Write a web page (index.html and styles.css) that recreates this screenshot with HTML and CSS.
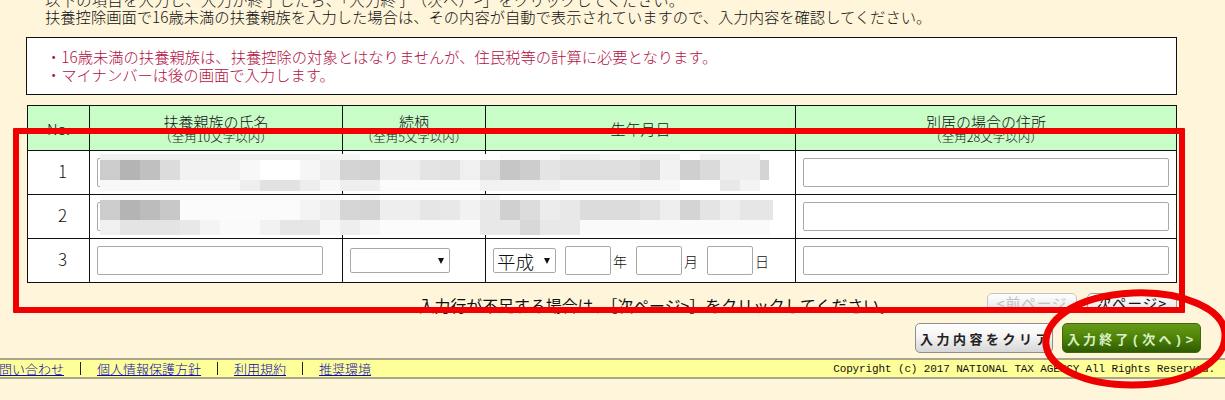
FILE: index.html
```html
<!DOCTYPE html>
<html lang="ja">
<head>
<meta charset="utf-8">
<title>扶養親族入力</title>
<link rel="stylesheet" href="styles.css">
</head>
<body>
<main class="page">
  <div class="intro">
    <p class="intro-first">以下の項目を入力し、入力が終了したら、「入力終了（次へ）&gt;」をクリックしてください。</p>
    <p>扶養控除画面で16歳未満の扶養親族を入力した場合は、その内容が自動で表示されていますので、入力内容を確認してください。</p>
  </div>
  <div class="notice">
    <p>・16歳未満の扶養親族は、扶養控除の対象とはなりませんが、住民税等の計算に必要となります。</p>
    <p>・マイナンバーは後の画面で入力します。</p>
  </div>
  <div class="table-wrap">
    <table class="grid">
      <colgroup>
        <col class="c-no"><col class="c-name"><col class="c-rel"><col class="c-date"><col class="c-addr">
      </colgroup>
      <thead>
        <tr>
          <th>No.</th>
          <th>扶養親族の氏名<small>（全角10文字以内）</small></th>
          <th>続柄<small>（全角5文字以内）</small></th>
          <th>生年月日</th>
          <th>別居の場合の住所<small>（全角28文字以内）</small></th>
        </tr>
      </thead>
      <tbody>
        <tr>
          <td class="num">1</td>
          <td><input class="field name" type="text"></td>
          <td></td>
          <td></td>
          <td><input class="field wide" type="text"></td>
        </tr>
        <tr>
          <td class="num">2</td>
          <td><input class="field name" type="text"></td>
          <td></td>
          <td></td>
          <td><input class="field wide" type="text"></td>
        </tr>
        <tr>
          <td class="num">3</td>
          <td><input class="field name" type="text"></td>
          <td><span class="sel sel-rel"><select><option></option></select></span></td>
          <td>
            <div class="date">
              <span class="sel sel-era"><select><option>平成</option></select></span>
              <input class="field day first" type="text"><span class="unit">年</span>
              <input class="field day" type="text"><span class="unit">月</span>
              <input class="field day" type="text"><span class="unit">日</span>
            </div>
          </td>
          <td><input class="field wide" type="text"></td>
        </tr>
      </tbody>
    </table>
    <div class="mosaic" aria-hidden="true">
      <div class="band b1a"></div>
      <div class="band b1b"></div>
      <div class="band b1c"></div>
      <div class="band-gap"></div>
      <div class="band b2a"></div>
      <div class="band b2b"></div>
      <div class="band b2c"></div>
    </div>
  </div>
  <div class="pager">
    <p class="pager-text">入力行が不足する場合は、［次ページ&gt;］をクリックしてください。</p>
    <button class="btn page-btn off" type="button">&lt;前ページ</button>
    <button class="btn page-btn" type="button">次ページ&gt;</button>
  </div>
  <div class="actions">
    <button class="btn clear" type="button">入力内容をクリア</button>
    <button class="btn finish" type="button">入力終了(次へ)&gt;</button>
  </div>
  <footer class="foot">
    <nav class="foot-links">
      <a href="#">お問い合わせ</a><span class="bar"></span>
      <a href="#">個人情報保護方針</a><span class="bar"></span>
      <a href="#">利用規約</a><span class="bar"></span>
      <a href="#">推奨環境</a>
    </nav>
    <span class="copy">Copyright (c) 2017 NATIONAL TAX AGENCY All Rights Reserved.</span>
  </footer>
</main>
<div class="mark-rect"></div>
<svg class="mark-oval" width="1225" height="400" viewBox="0 0 1225 400" aria-hidden="true">
  <path d="M1046 345 C1044 322 1072 296 1133 293 C1180 291 1226 308 1225 336 C1225 362 1186 385 1132 385 C1085 385 1049 368 1046 345 Z"/>
</svg>
</body>
</html>
```
FILE: styles.css
```css
* { box-sizing: border-box; }
html, body { margin: 0; padding: 0; height: 400px; overflow: hidden; }
body {
  position: relative;
  background: #fef5da;
  color: #111;
  font-family: "Noto Sans CJK JP", "Liberation Sans", sans-serif;
  font-weight: 300;
}
p { margin: 0; }
.intro {
  margin: -9px 0 0 45px;
  font-size: 15.3px;
  line-height: 17px;
  white-space: nowrap;
  height: 34px;
}
.intro-first { letter-spacing: 0.3px; }
.notice {
  margin: 12px 48px 0 26px;
  height: 58px;
  padding: 9px 0 0 19px;
  background: #fff;
  border: 1px solid #111;
  color: #b2103f;
  font-size: 15.3px;
  line-height: 18px;
  white-space: nowrap;
}
.table-wrap {
  position: relative;
  margin: 10px 0 0 27px;
  width: 1149px;
}
.grid {
  width: 1149px;
  table-layout: fixed;
  border-collapse: collapse;
  background: #fff;
}
.c-no { width: 62px; }
.c-name { width: 253px; }
.c-rel { width: 143px; }
.c-date { width: 310px; }
.c-addr { width: 381px; }
.grid th, .grid td {
  border: 1px solid #111;
  padding: 0 7px;
}
.grid th {
  height: 45px;
  padding: 0;
  background: #c8fdc8;
  font-size: 15px;
  font-weight: 300;
  line-height: 17px;
  vertical-align: middle;
}
.grid small {
  display: block;
  font-size: 12.5px;
  line-height: 14px;
}
.grid td { height: 44px; }
.grid .num {
  text-align: center;
  padding: 0 0 4px 8px;
  font-size: 17px;
}
.field {
  display: block;
  height: 29px;
  padding: 0;
  border: 1px solid #a9a9a9;
  border-radius: 2px;
  background: #fff;
}
.wide { width: 100%; }
.name { width: 226px; }
.sel { position: relative; display: block; height: 25px; }
.sel select {
  appearance: none;
  display: block;
  width: 100%;
  height: 100%;
  padding: 0 0 0 3px;
  border: 1px solid #a9a9a9;
  border-radius: 2px;
  background: #fff;
  color: #111;
  font-family: inherit;
  font-weight: 300;
  font-size: 18.5px;
  line-height: 22px;
}
.sel::after {
  content: "";
  position: absolute;
  right: 6px;
  top: 10px;
  border-left: 3px solid transparent;
  border-right: 3px solid transparent;
  border-top: 6px solid #111;
}
.sel-rel { width: 100px; }
.sel-era { width: 63px; }
.date { display: flex; align-items: center; }
.day { width: 46px; flex: none; margin-left: 7px; }
.day.first { margin-left: 9px; }
.unit { width: 18px; font-size: 14px; padding-left: 2px; flex: none; }
.mosaic {
  position: absolute;
  left: 73px;
  top: 49px;
  width: 680px;
}
.band { height: 6px; }
.band-gap { height: 4px; }
.b1a {
  background: linear-gradient(to right,
    #eef1ef 0 220px, #f4f6f4 220px 260px, #fff 260px 400px, #fafafa 400px 460px,
    #eef1ef 460px 500px, #f8f8f8 500px 540px, #eef1ef 540px 580px, #fff 580px 600px,
    #eef1ef 600px 660px, #fff 660px);
}
.b1b {
  height: 20px;
  background: linear-gradient(to right,
    #ccc 0 20px, #b4b4b4 20px 40px, #c0c0c0 40px 60px, #dcdcdc 60px 80px,
    #f2f2f2 80px 140px, #f8f8f8 140px 160px, #fff 160px 200px, #f6f6f6 200px 220px,
    #eee 220px 240px, #d4d4d4 240px 260px, #d2d2d2 260px 280px, #eee 280px 320px,
    #e4e4e4 320px 340px, #e2e2e2 340px 360px, #f0f0f0 360px 380px, #dedede 380px 400px,
    #c6c6c6 400px 420px, #cdcdcd 420px 440px, #e4e4e4 440px 460px, #dedede 460px 540px,
    #d8d8d8 540px 560px, #f2f2f2 560px 580px, #cfcfcf 580px 600px, #dadada 600px 620px,
    #eee 620px 660px, #d4d4d4 660px 669px, #fff 669px);
}
.b1c {
  height: 11px;
  background: linear-gradient(to right,
    #f8f8f8 0 140px, #efefef 140px 160px, #e2e2e2 160px 200px, #ededed 200px 220px,
    #f8f8f8 220px 240px, #efefef 240px 280px, #fbfbfb 280px 380px, #f2f2f2 380px 460px,
    #f8f8f8 460px 580px, #fff 580px 620px, #e8e8e8 620px 640px, #f4f4f4 640px 660px, #fff 660px);
}
.b2a {
  height: 5px;
  background: linear-gradient(to right, #fafafa 0 240px, #fff 240px 260px, #f6f6f6 260px 280px, #fff 280px 380px, #f2f2f2 380px 400px, #fff 400px);
}
.b2b {
  height: 20px;
  background: linear-gradient(to right,
    #ccc 0 20px, #b4b4b4 20px 40px, #bcbcbc 40px 60px, #c8c8c8 60px 80px,
    #fbfbfb 80px 200px, #f4f4f4 200px 220px, #eee 220px 240px, #d6d6d6 240px 260px,
    #d4d4d4 260px 280px, #eee 280px 320px, #e6e6e6 320px 340px, #e8e8e8 340px 360px,
    #f2f2f2 360px 380px, #e8e8e8 380px 400px, #d0d0d0 400px 420px, #dcdcdc 420px 440px,
    #ececec 440px 460px, #e8e8e8 460px 480px, #dcdcdc 480px 540px, #e2e2e2 540px 560px,
    #eee 560px 580px, #d4d4d4 580px 600px, #e4e4e4 600px 620px, #eee 620px 640px,
    #e6e6e6 640px 673px, #fff 673px);
}
.b2c {
  height: 15px;
  background: linear-gradient(to right,
    #f0f0f0 0 20px, #e4e4e4 20px 80px, #e8e8e8 80px 100px, #f4f4f4 100px 120px,
    #fafafa 120px 160px, #f2f2f2 160px 180px, #e6e6e6 180px 220px, #f8f8f8 220px 240px,
    #eee 240px 260px, #f6f6f6 260px 280px, #fcfcfc 280px 380px, #e8e8e8 380px 420px,
    #d8d8d8 420px 440px, #e8e8e8 440px 480px, #fafafa 480px 670px, #fff 670px);
}
.pager {
  display: flex;
  justify-content: flex-end;
  align-items: flex-start;
  gap: 10px;
  margin: 10px 48px 0 0;
  height: 20px;
}
.pager-text {
  margin-right: 82px;
  font-size: 15.9px;
  font-weight: 400;
  line-height: 25px;
  white-space: nowrap;
}
.btn {
  font-family: inherit;
  padding: 0;
  border-radius: 5px;
  white-space: nowrap;
}
.page-btn {
  width: 90px;
  height: 20px;
  border: 1px solid #9a9a9a;
  background: linear-gradient(#fff, #e4e4e4);
  color: #111;
  font-size: 14.5px;
  font-weight: 400;
  line-height: 18px;
  letter-spacing: 1px;
}
.page-btn.off { border-color: #c4c4c4; color: #c0c0c0; }
.actions {
  display: flex;
  justify-content: flex-end;
  gap: 9px;
  margin: 10px 24px 0 0;
}
.clear, .finish {
  height: 30px;
  font-size: 13px;
  font-weight: 700;
  text-align: left;
  padding-left: 4px;
}
.clear {
  width: 138px;
  border: 1px solid #8e8e8e;
  background: linear-gradient(#fff, #f4f4f4 45%, #d6d6d6);
  color: #222;
  letter-spacing: 3.5px;
}
.finish {
  width: 139px;
  border: 1px solid #3d6a08;
  background: linear-gradient(#659a18, #4d8208 50%, #2f5a02);
  color: #dcefc4;
  font-family: "Liberation Mono", "Noto Sans CJK JP", monospace;
  letter-spacing: 3.1px;
}
.foot {
  display: flex;
  justify-content: space-between;
  align-items: center;
  height: 21px;
  margin-top: 5px;
  padding-right: 10px;
  background: #ffff99;
  border-top: 2px solid #a8a68c;
  border-bottom: 2px solid #a8a68c;
  white-space: nowrap;
}
.foot-links {
  display: flex;
  align-items: center;
  margin-left: -14px;
  font-size: 13px;
  line-height: 17px;
}
.foot-links a { color: #0a0ab4; text-decoration: underline; }
.bar { width: 1px; height: 13px; margin: 0 16px; background: #222; }
.copy {
  font-family: "Liberation Mono", monospace;
  font-weight: 400;
  font-size: 11px;
  letter-spacing: -0.13px;
  color: #111;
}
.mark-rect {
  position: absolute;
  left: 13px;
  top: 128px;
  width: 1172px;
  height: 185px;
  border: 6px solid #f00000;
  border-radius: 1px;
  pointer-events: none;
}
.mark-oval {
  position: absolute;
  left: 0;
  top: 0;
  pointer-events: none;
}
.mark-oval path {
  fill: none;
  stroke: #ee0000;
  stroke-width: 7;
}
```
